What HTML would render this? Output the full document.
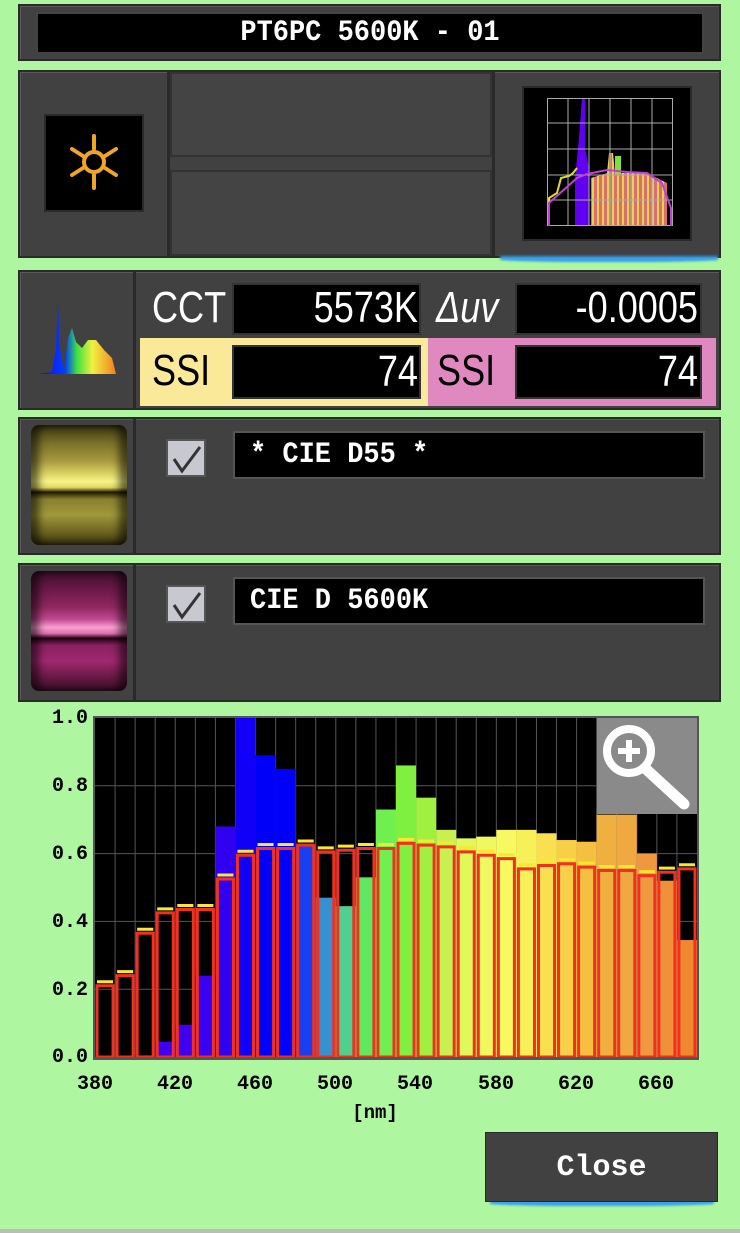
<!DOCTYPE html>
<html><head><meta charset="utf-8"><style>
*{margin:0;padding:0;box-sizing:border-box}
body{width:740px;height:1233px;background:#aef7a0;position:relative;overflow:hidden;font-family:"Liberation Sans",sans-serif;color:#fff}
.a{position:absolute}
.pan{position:absolute;background:#414141;border:2px solid #2a2a2a;box-shadow:inset 1px 1px 0 #5a5a5a}
.blk{position:absolute;background:#000;border:2px solid #555}
.big{font-size:44px;line-height:50px;transform:scaleX(.82);white-space:nowrap}
.mono{font-family:"Liberation Mono",monospace;font-weight:bold}
.glow{position:absolute;height:6px;background:#3aa0e8;border-radius:0 0 40% 40%;filter:blur(1px)}
.roll{position:absolute;left:31px;width:96px;top:10px;height:120px;border-radius:8px}
.cb{position:absolute;left:146px;top:20px;width:40px;height:38px;background:#c8c8d0;border:2px solid #555}
.yl{font-family:"Liberation Mono",monospace;font-weight:bold;font-size:20px;position:absolute;left:40px;width:48px;text-align:right;color:#000}
.xl{font-family:"Liberation Mono",monospace;font-weight:bold;font-size:20px;position:absolute;top:1073px;width:60px;text-align:center;color:#000}
</style></head><body>

<div class="pan" style="left:18px;top:4px;width:703px;height:57px"></div>
<div class="blk" style="left:36px;top:12px;width:668px;height:42px;border-color:#444"></div>
<div class="a mono" style="left:36px;top:12px;width:668px;height:42px;line-height:42px;text-align:center;font-size:30px;transform:scaleX(.9)">PT6PC 5600K - 01</div>

<div class="pan" style="left:18px;top:70px;width:703px;height:188px"></div>
<div class="a" style="left:167px;top:70px;width:3px;height:188px;background:#2a2a2a"></div>
<div class="a" style="left:170px;top:72px;width:322px;height:85px;background:#444;border:2px solid #333"></div>
<div class="a" style="left:170px;top:170px;width:322px;height:86px;background:#444;border:2px solid #333"></div>
<div class="a" style="left:492px;top:70px;width:3px;height:188px;background:#2a2a2a"></div>
<div class="a" style="left:44px;top:114px;width:100px;height:98px;background:#000;border:2px solid #2a2a2a"></div>
<svg class="a" style="left:64px;top:132px" width="60" height="60" viewBox="0 0 60 60">
<g stroke="#f0a428" stroke-width="4" fill="none" stroke-linecap="round"><circle cx="30" cy="30" r="10"/>
<line x1="30" y1="4" x2="30" y2="17"/><line x1="30" y1="43" x2="30" y2="56"/>
<line x1="8" y1="17" x2="19" y2="24"/><line x1="41" y1="36" x2="52" y2="43"/>
<line x1="8" y1="43" x2="19" y2="36"/><line x1="41" y1="24" x2="52" y2="17"/></g></svg>
<div class="a" style="left:522px;top:86px;width:170px;height:155px;background:#000;border:2px solid #2a2a2a"></div>
<svg class="a" style="left:547px;top:98px" width="126" height="128" viewBox="0 0 126 128">
<defs><pattern id="st" width="5" height="128" patternUnits="userSpaceOnUse"><rect width="2" height="128" fill="#e8d050"/><rect x="2" width="3" height="128" fill="#d87070"/></pattern></defs>
<polygon points="28,128 28,80 32,40 35,0 38,0 38,50 42,70 42,128" fill="#6000f0"/>
<polygon points="44,128 44,80 60,75 62,55 66,55 68,75 100,75 120,85 120,128" fill="url(#st)"/>
<rect x="68" y="58" width="6" height="18" fill="#80e040"/>
<g stroke="#aaa" stroke-width="1"><rect x="0.5" y="0.5" width="125" height="127" fill="none"/>
<line x1="21" y1="0" x2="21" y2="128"/><line x1="42" y1="0" x2="42" y2="128"/><line x1="63" y1="0" x2="63" y2="128"/><line x1="84" y1="0" x2="84" y2="128"/><line x1="105" y1="0" x2="105" y2="128"/>
<line x1="0" y1="25" x2="126" y2="25"/><line x1="0" y1="51" x2="126" y2="51"/><line x1="0" y1="77" x2="126" y2="77"/><line x1="0" y1="102" x2="126" y2="102"/></g>
<polyline points="2,128 2,100 10,95 14,80 22,78 26,75 30,70" fill="none" stroke="#e0e020" stroke-width="2"/>
<polyline points="2,128 2,105 30,80 40,76 60,72 80,74 100,75 115,85 124,110 124,128" fill="none" stroke="#c040d0" stroke-width="2"/>
</svg>
<div class="glow" style="left:500px;top:256px;width:218px"></div>

<div class="pan" style="left:18px;top:270px;width:703px;height:140px"></div>
<div class="a" style="left:133px;top:272px;width:3px;height:136px;background:#2a2a2a"></div>
<svg class="a" style="left:38px;top:298px" width="80" height="78" viewBox="0 0 80 78">
<defs><linearGradient id="sp" x1="0" x2="1"><stop offset="0" stop-color="#2000f0"/><stop offset=".35" stop-color="#0040ff"/><stop offset=".5" stop-color="#40e040"/><stop offset=".7" stop-color="#f0f040"/><stop offset="1" stop-color="#f08020"/></linearGradient></defs>
<polygon points="0,76 14,74 18,50 20,4 22,50 26,74 30,40 34,30 38,44 44,50 50,42 58,42 66,52 74,60 78,76" fill="url(#sp)"/></svg>
<div class="a big" style="left:152px;top:283px;transform-origin:left">CCT</div>
<div class="blk" style="left:232px;top:283px;width:189px;height:52px;border-color:#333"></div>
<div class="a big" style="left:180px;top:283px;width:238px;text-align:right;transform-origin:right">5573K</div>
<div class="a big" style="left:436px;top:283px;transform-origin:left;font-style:italic">Δuv</div>
<div class="blk" style="left:515px;top:283px;width:187px;height:52px;border-color:#333"></div>
<div class="a big" style="left:440px;top:283px;width:258px;text-align:right;transform-origin:right">-0.0005</div>
<div class="a" style="left:140px;top:338px;width:288px;height:68px;background:#fbe99a"></div>
<div class="a" style="left:428px;top:338px;width:288px;height:68px;background:#e088c0"></div>
<div class="a big" style="left:152px;top:346px;color:#000;transform-origin:left">SSI</div>
<div class="a big" style="left:437px;top:346px;color:#000;transform-origin:left">SSI</div>
<div class="blk" style="left:232px;top:345px;width:189px;height:54px;border-color:#333"></div>
<div class="blk" style="left:515px;top:345px;width:187px;height:54px;border-color:#333"></div>
<div class="a big" style="left:180px;top:347px;width:238px;text-align:right;transform-origin:right">74</div>
<div class="a big" style="left:440px;top:347px;width:258px;text-align:right;transform-origin:right">74</div>

<div class="pan" style="left:18px;top:417px;width:703px;height:138px">
 <div class="a" style="left:113px;top:0;width:3px;height:134px;background:#2a2a2a"></div>
 <div class="roll" style="left:11px;top:6px;background:linear-gradient(#3a3410,#7a7028 15%,#a89a40 30%,#d8d060 40%,#f8f488 47%,#e0d860 52%,#201a00 56%,#8a8030 62%,#a09838 75%,#6a6020 90%,#3a3410);box-shadow:inset 8px 0 8px rgba(0,0,0,.55),inset -8px 0 8px rgba(0,0,0,.55)"></div>
 <div class="cb" style="top:20px"></div>
 <svg class="a" style="left:150px;top:24px" width="34" height="32"><polyline points="4,16 12,28 30,4" fill="none" stroke="#333" stroke-width="3"/></svg>
 <div class="blk" style="left:213px;top:12px;width:472px;height:48px;border-color:#555"></div>
 <div class="a mono" style="left:230px;top:12px;line-height:48px;font-size:30px;transform:scaleX(.9);transform-origin:left">* CIE D55 *</div>
</div>

<div class="pan" style="left:18px;top:563px;width:703px;height:139px">
 <div class="a" style="left:113px;top:0;width:3px;height:135px;background:#2a2a2a"></div>
 <div class="roll" style="left:11px;top:6px;background:linear-gradient(#3a1028,#6a1848 15%,#902860 30%,#c04890 40%,#f8a0d0 47%,#e070b0 52%,#200010 56%,#8a2060 62%,#a02870 75%,#601840 90%,#3a1028);box-shadow:inset 8px 0 8px rgba(0,0,0,.55),inset -8px 0 8px rgba(0,0,0,.55)"></div>
 <div class="cb" style="top:20px"></div>
 <svg class="a" style="left:150px;top:24px" width="34" height="32"><polyline points="4,16 12,28 30,4" fill="none" stroke="#333" stroke-width="3"/></svg>
 <div class="blk" style="left:213px;top:12px;width:472px;height:48px;border-color:#555"></div>
 <div class="a mono" style="left:230px;top:12px;line-height:48px;font-size:30px;transform:scaleX(.9);transform-origin:left">CIE D 5600K</div>
</div>

<div class="a" style="left:93px;top:716px;width:606px;height:344px;background:#555"></div>
<svg class="a" style="left:95px;top:718px" width="602" height="339" viewBox="0 0 300 100" preserveAspectRatio="none">
<rect width="300" height="100" fill="#000"/>
<g stroke="#555" stroke-width="1">
<path d="M10 0V100M20 0V100M30 0V100M40 0V100M50 0V100M60 0V100M70 0V100M80 0V100M90 0V100M100 0V100M110 0V100M120 0V100M130 0V100M140 0V100M150 0V100M160 0V100M170 0V100M180 0V100M190 0V100M200 0V100M210 0V100M220 0V100M230 0V100M240 0V100M250 0V100M260 0V100M270 0V100M280 0V100M290 0V100M0 20H300M0 40H300M0 60H300M0 80H300" vector-effect="non-scaling-stroke"/></g>
<g>
<rect x="20" y="99.5" width="10" height="0.5" fill="#4000f0"/>
<rect x="30" y="95.5" width="10" height="4.5" fill="#4000f0"/>
<rect x="40" y="90.5" width="10" height="9.5" fill="#4000f0"/>
<rect x="50" y="76" width="10" height="24" fill="#3a00f0"/>
<rect x="60" y="32" width="10" height="68" fill="#3000f0"/>
<rect x="70" y="0" width="10" height="100" fill="#1000f8"/>
<rect x="80" y="11" width="10" height="89" fill="#0000f8"/>
<rect x="90" y="15" width="10" height="85" fill="#0000f8"/>
<rect x="100" y="37.5" width="10" height="62.5" fill="#1840f0"/>
<rect x="110" y="53" width="10" height="47" fill="#3890d0"/>
<rect x="120" y="55.5" width="10" height="44.5" fill="#50d090"/>
<rect x="130" y="47" width="10" height="53" fill="#60e860"/>
<rect x="140" y="27" width="10" height="73" fill="#70f050"/>
<rect x="150" y="14" width="10" height="86" fill="#80f040"/>
<rect x="160" y="23.5" width="10" height="76.5" fill="#a0f040"/>
<rect x="170" y="33" width="10" height="67" fill="#c8f050"/>
<rect x="180" y="35.5" width="10" height="64.5" fill="#e0f858"/>
<rect x="190" y="35" width="10" height="65" fill="#f0f860"/>
<rect x="200" y="33" width="10" height="67" fill="#f8f860"/>
<rect x="210" y="33" width="10" height="67" fill="#f8f058"/>
<rect x="220" y="34" width="10" height="66" fill="#f8e050"/>
<rect x="230" y="36" width="10" height="64" fill="#f8d048"/>
<rect x="240" y="36.5" width="10" height="63.5" fill="#f5c040"/>
<rect x="250" y="28.5" width="10" height="71.5" fill="#f0b040"/>
<rect x="260" y="28.5" width="10" height="71.5" fill="#f0a840"/>
<rect x="270" y="40" width="10" height="60" fill="#f09840"/>
<rect x="280" y="48" width="10" height="52" fill="#f09038"/>
<rect x="290" y="65.5" width="10" height="34.5" fill="#f08830"/>
</g>
<g fill="none" stroke="#f8e830" stroke-width="3">
<path vector-effect="non-scaling-stroke" d="M1 77.8H9M11 74.8H19M21 62.3H29M31 56.3H39M41 55.3H49M51 55.3H59M61 46.3H69M71 39.3H79M81 37.3H89M91 37.3H99M101 36.3H109M111 38.3H119M121 37.8H129M131 37.3H139M141 37.3H149M151 35.8H159M161 36.3H169M171 36.8H179M181 38.3H189M191 39.3H199M201 40.3H209M211 43.3H219M221 42.3H229M231 41.8H239M241 42.8H249M251 43.8H259M261 43.8H269M271 45.3H279M281 44.3H289M291 43.3H299"/></g>
<g fill="none" stroke="#f03020" stroke-width="3">
<rect x="1" y="79" width="8" height="21" vector-effect="non-scaling-stroke"/>
<rect x="11" y="76" width="8" height="24" vector-effect="non-scaling-stroke"/>
<rect x="21" y="63.5" width="8" height="36.5" vector-effect="non-scaling-stroke"/>
<rect x="31" y="57.5" width="8" height="42.5" vector-effect="non-scaling-stroke"/>
<rect x="41" y="56.5" width="8" height="43.5" vector-effect="non-scaling-stroke"/>
<rect x="51" y="56.5" width="8" height="43.5" vector-effect="non-scaling-stroke"/>
<rect x="61" y="47.5" width="8" height="52.5" vector-effect="non-scaling-stroke"/>
<rect x="71" y="40.5" width="8" height="59.5" vector-effect="non-scaling-stroke"/>
<rect x="81" y="38.5" width="8" height="61.5" vector-effect="non-scaling-stroke"/>
<rect x="91" y="38.5" width="8" height="61.5" vector-effect="non-scaling-stroke"/>
<rect x="101" y="37.5" width="8" height="62.5" vector-effect="non-scaling-stroke"/>
<rect x="111" y="39.5" width="8" height="60.5" vector-effect="non-scaling-stroke"/>
<rect x="121" y="39" width="8" height="61" vector-effect="non-scaling-stroke"/>
<rect x="131" y="38.5" width="8" height="61.5" vector-effect="non-scaling-stroke"/>
<rect x="141" y="38.5" width="8" height="61.5" vector-effect="non-scaling-stroke"/>
<rect x="151" y="37" width="8" height="63" vector-effect="non-scaling-stroke"/>
<rect x="161" y="37.5" width="8" height="62.5" vector-effect="non-scaling-stroke"/>
<rect x="171" y="38" width="8" height="62" vector-effect="non-scaling-stroke"/>
<rect x="181" y="39.5" width="8" height="60.5" vector-effect="non-scaling-stroke"/>
<rect x="191" y="40.5" width="8" height="59.5" vector-effect="non-scaling-stroke"/>
<rect x="201" y="41.5" width="8" height="58.5" vector-effect="non-scaling-stroke"/>
<rect x="211" y="44.5" width="8" height="55.5" vector-effect="non-scaling-stroke"/>
<rect x="221" y="43.5" width="8" height="56.5" vector-effect="non-scaling-stroke"/>
<rect x="231" y="43" width="8" height="57" vector-effect="non-scaling-stroke"/>
<rect x="241" y="44" width="8" height="56" vector-effect="non-scaling-stroke"/>
<rect x="251" y="45" width="8" height="55" vector-effect="non-scaling-stroke"/>
<rect x="261" y="45" width="8" height="55" vector-effect="non-scaling-stroke"/>
<rect x="271" y="46.5" width="8" height="53.5" vector-effect="non-scaling-stroke"/>
<rect x="281" y="45.5" width="8" height="54.5" vector-effect="non-scaling-stroke"/>
<rect x="291" y="44.5" width="8" height="55.5" vector-effect="non-scaling-stroke"/>
</g>
</svg>
<div class="a" style="left:597px;top:718px;width:100px;height:96px;background:#8a8a8a"></div>
<svg class="a" style="left:597px;top:718px" width="100" height="96" viewBox="0 0 100 96">
<circle cx="32" cy="33" r="22" fill="none" stroke="#fff" stroke-width="8"/>
<path d="M32 22V44M21 33H43" stroke="#fff" stroke-width="6"/>
<path d="M50 52L87 86" stroke="#fff" stroke-width="11" stroke-linecap="round"/></svg>

<div class="yl" style="top:707px">1.0</div>
<div class="yl" style="top:775px">0.8</div>
<div class="yl" style="top:843px">0.6</div>
<div class="yl" style="top:911px">0.4</div>
<div class="yl" style="top:979px">0.2</div>
<div class="yl" style="top:1046px">0.0</div>
<div class="xl" style="left:65px">380</div>
<div class="xl" style="left:145px">420</div>
<div class="xl" style="left:225px">460</div>
<div class="xl" style="left:305px">500</div>
<div class="xl" style="left:385px">540</div>
<div class="xl" style="left:466px">580</div>
<div class="xl" style="left:546px">620</div>
<div class="xl" style="left:626px">660</div>
<div class="a mono" style="left:340px;top:1102px;width:70px;text-align:center;font-size:19px;color:#000">[nm]</div>

<div class="glow" style="left:490px;top:1200px;width:224px"></div>
<div class="a mono" style="left:485px;top:1132px;width:233px;height:70px;background:#414141;border:1px solid #2a2a2a;text-align:center;line-height:70px;font-size:30px">Close</div>
<div class="a" style="left:0;top:1229px;width:740px;height:4px;background:#bbb"></div>
</body></html>
